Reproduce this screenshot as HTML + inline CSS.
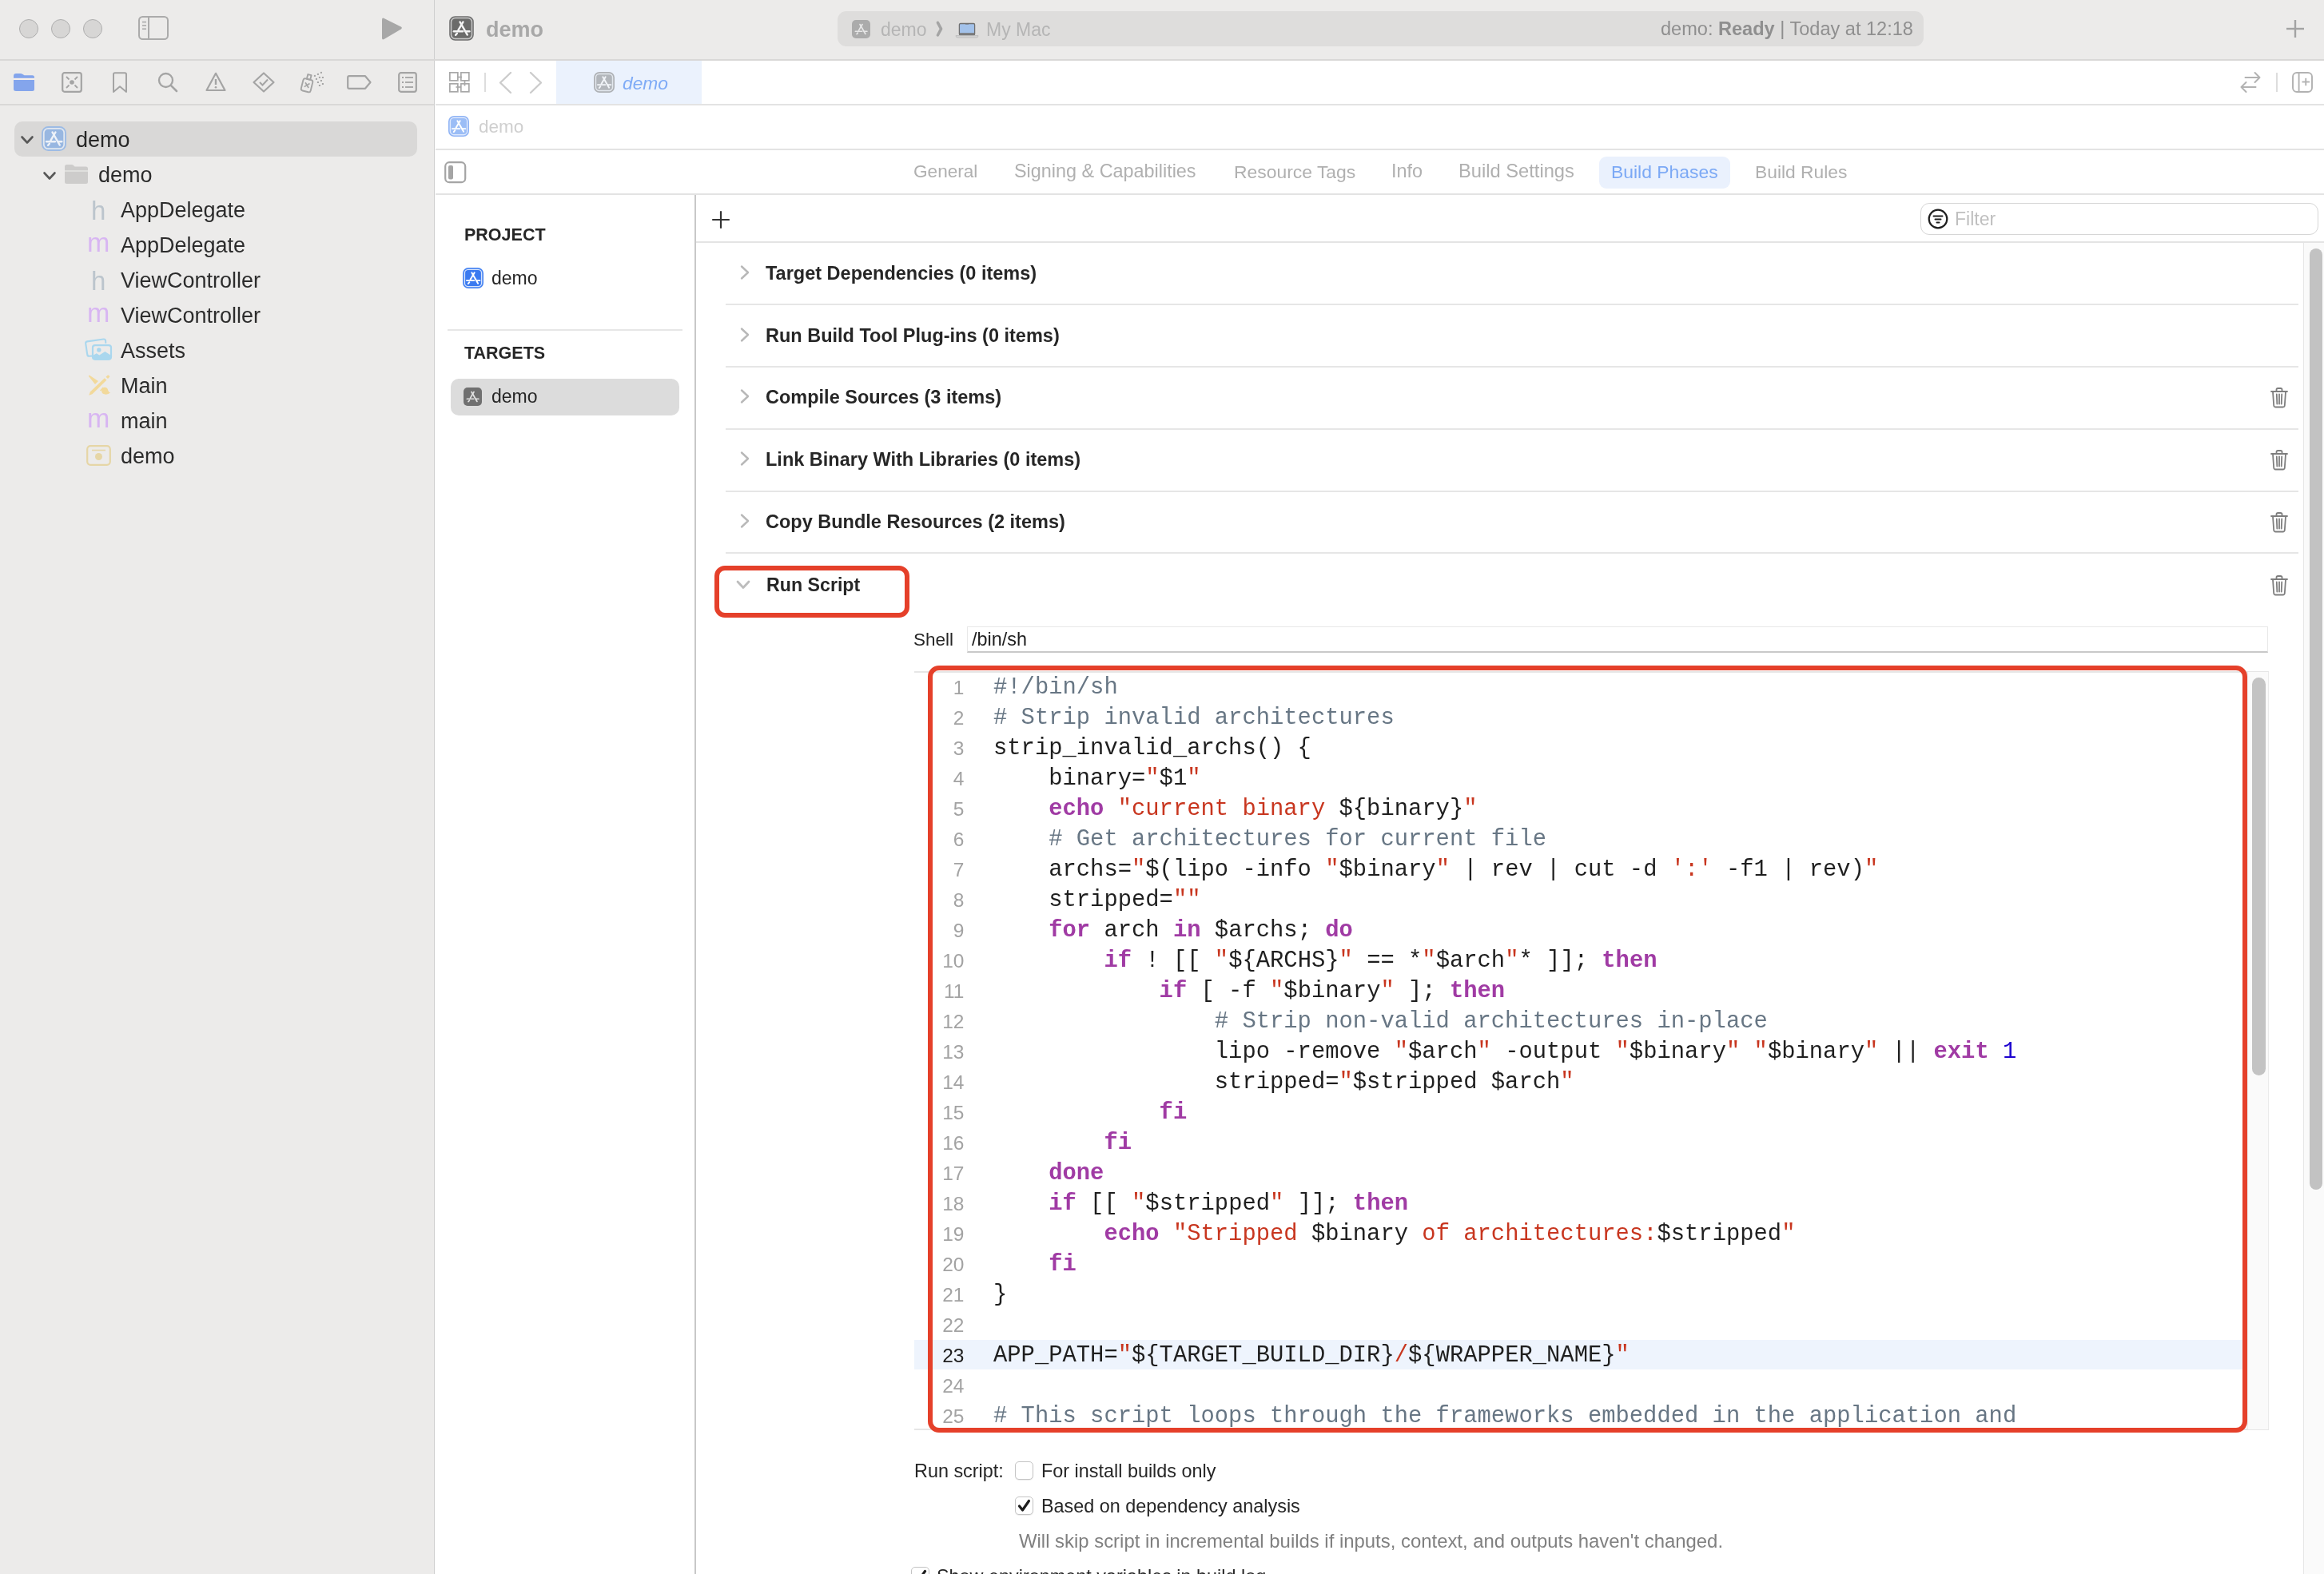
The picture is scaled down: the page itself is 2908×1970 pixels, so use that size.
<!DOCTYPE html>
<html><head><meta charset="utf-8">
<style>
*{margin:0;padding:0;box-sizing:border-box}
html,body{width:2908px;height:1970px;overflow:hidden;background:#fff;font-family:"Liberation Sans",sans-serif;color:#262626;position:relative}
.a{position:absolute}
.t{position:absolute;white-space:pre;line-height:1;will-change:transform}
svg{position:absolute;overflow:visible}
.code{font-family:"Liberation Mono",monospace;font-size:28.83px;color:#1F1F1F}
.ln{font-family:"Liberation Sans",sans-serif;font-size:24.5px;text-align:right}
.cm{color:#677684}
.kw{color:#A03BA4;font-weight:bold}
.st{color:#C8361F}
.nu{color:#1C00CF}
</style></head><body>
<div class="a" style="left:0px;top:0px;width:543px;height:1970px;background:#ECEBEA;"></div>
<div class="a" style="left:543px;top:0px;width:1.3999999999999773px;height:1970px;background:#CFCFCF;"></div>
<div class="a" style="left:544.4px;top:0px;width:2363.6px;height:75px;background:#ECEBEA;"></div>
<div class="a" style="left:0px;top:74px;width:2908px;height:2px;background:#D9D8D7;"></div>
<div class="a" style="left:0px;top:130px;width:543px;height:2px;background:#D9D8D7;"></div>
<div class="a" style="left:545px;top:130px;width:2363px;height:2px;background:#E3E3E3;"></div>
<div class="a" style="left:545px;top:186px;width:2363px;height:2px;background:#E3E3E3;"></div>
<div class="a" style="left:545px;top:242px;width:2363px;height:2px;background:#E3E3E3;"></div>
<div class="a" style="left:869px;top:244px;width:2px;height:1726px;background:#C8C8C8;"></div>
<div class="a" style="left:24px;top:24px;width:24px;height:24px;border-radius:50%;background:#D7D6D5;border:1.3px solid #AEAEAE"></div>
<div class="a" style="left:64px;top:24px;width:24px;height:24px;border-radius:50%;background:#D7D6D5;border:1.3px solid #AEAEAE"></div>
<div class="a" style="left:104px;top:24px;width:24px;height:24px;border-radius:50%;background:#D7D6D5;border:1.3px solid #AEAEAE"></div>
<svg style="left:173px;top:20px" width="38" height="30" viewBox="0 0 38 30"><rect x="1" y="1" width="36" height="28" rx="4.5" fill="none" stroke="#ABABAB" stroke-width="2"/><line x1="13" y1="1.5" x2="13" y2="28.5" stroke="#ABABAB" stroke-width="2"/><g stroke="#ABABAB" stroke-width="1.6"><line x1="5" y1="7.6" x2="10" y2="7.6"/><line x1="5" y1="11.9" x2="10" y2="11.9"/><line x1="5" y1="16.2" x2="10" y2="16.2"/></g></svg>
<svg style="left:476px;top:21px" width="28" height="30" viewBox="0 0 28 30"><path d="M2 3.5 Q2 0.6 4.6 1.9 L25.8 12.6 Q28 14 25.8 15.4 L4.6 28.1 Q2 29.4 2 26.5 Z" fill="#A7A7A7"/></svg>
<svg style="left:16px;top:91px" width="28" height="24" viewBox="0 0 28 24"><path d="M1 4 Q1 1 4 1 L9.5 1 Q11 1 12.5 2 L14.5 3.2 L24.5 3.2 Q27 3.2 27 5.7 L27 20.5 Q27 23 24.5 23 L4 23 Q1 23 1 20.5 Z" fill="#84A5EC"/><rect x="1" y="6.8" width="26" height="2.2" fill="#F7F0EA"/></svg>
<svg style="left:77px;top:90px" width="26" height="26" viewBox="0 0 26 26"><rect x="1.2" y="1.2" width="23.6" height="23.6" rx="2.5" fill="none" stroke="#A4A4A4" stroke-width="2.2"/><circle cx="13" cy="13" r="2.8" fill="#A4A4A4"/><path d="M6 6 L9.5 9.5 M20 6 L16.5 9.5 M6 20 L9.5 16.5 M20 20 L16.5 16.5" stroke="#A4A4A4" stroke-width="1.8"/></svg>
<svg style="left:140px;top:90px" width="20" height="27" viewBox="0 0 20 27"><path d="M2 3 Q2 1.2 3.8 1.2 L16.2 1.2 Q18 1.2 18 3 L18 25 L10 18.3 L2 25 Z" fill="none" stroke="#A4A4A4" stroke-width="2" stroke-linejoin="round"/></svg>
<svg style="left:197px;top:90px" width="26" height="26" viewBox="0 0 26 26"><circle cx="10.5" cy="10.5" r="8.5" fill="none" stroke="#A4A4A4" stroke-width="2.3"/><line x1="16.8" y1="16.8" x2="24" y2="24" stroke="#A4A4A4" stroke-width="2.6" stroke-linecap="round"/></svg>
<svg style="left:257px;top:90px" width="26" height="25" viewBox="0 0 26 25"><path d="M13 1.8 L24.5 23 L1.5 23 Z" fill="none" stroke="#A4A4A4" stroke-width="2.2" stroke-linejoin="round"/><line x1="13" y1="9" x2="13" y2="16" stroke="#A4A4A4" stroke-width="2.4"/><circle cx="13" cy="19.3" r="1.3" fill="#A4A4A4"/></svg>
<svg style="left:316px;top:90px" width="28" height="26" viewBox="0 0 28 26"><path d="M14 1.5 L26.5 13 L14 24.5 L1.5 13 Z" fill="none" stroke="#A4A4A4" stroke-width="2.2" stroke-linejoin="round"/><path d="M9 13 L12.5 16.5 L19 9.5" fill="none" stroke="#A4A4A4" stroke-width="2"/></svg>
<svg style="left:374px;top:90px" width="32" height="28" viewBox="0 0 32 28"><g transform="rotate(14 10.1 16.6)" fill="none" stroke="#A4A4A4" stroke-width="1.9" stroke-linejoin="round"><rect x="4" y="9" width="12.2" height="15.6" rx="2.5"/><rect x="8" y="3.2" width="4.4" height="5.8"/><path d="M7.3 13.8 L12.9 19.4 M12.9 13.8 L7.3 19.4" stroke-width="1.7"/></g><g fill="#A4A4A4"><rect x="18.9" y="3.9000000000000004" width="2" height="2"/><rect x="22.9" y="1.9" width="2" height="2"/><rect x="26.9" y="-0.09999999999999998" width="2" height="2"/><rect x="20.9" y="7.9" width="2" height="2"/><rect x="24.9" y="5.9" width="2" height="2"/><rect x="28.9" y="6" width="2" height="2"/><rect x="22.9" y="12" width="2" height="2"/><rect x="26.9" y="10" width="2" height="2"/><rect x="24.9" y="16" width="2" height="2"/><rect x="28.9" y="14" width="2" height="2"/></g></svg>
<svg style="left:434px;top:94px" width="31" height="18" viewBox="0 0 31 18"><path d="M3 1.2 L23 1.2 L29.5 9 L23 16.8 L3 16.8 Q1.2 16.8 1.2 15 L1.2 3 Q1.2 1.2 3 1.2 Z" fill="none" stroke="#A4A4A4" stroke-width="2.2" stroke-linejoin="round"/></svg>
<svg style="left:498px;top:90px" width="24" height="26" viewBox="0 0 24 26"><rect x="1.2" y="1.2" width="21.6" height="23.6" rx="2.5" fill="none" stroke="#A4A4A4" stroke-width="2.2"/><g stroke="#A4A4A4" stroke-width="1.8"><line x1="5" y1="7" x2="7" y2="7"/><line x1="9" y1="7" x2="19" y2="7"/><line x1="5" y1="13" x2="7" y2="13"/><line x1="9" y1="13" x2="19" y2="13"/><line x1="5" y1="19" x2="7" y2="19"/><line x1="9" y1="19" x2="19" y2="19"/></g></svg>
<div class="a" style="left:18px;top:152px;width:504px;height:44px;background:#D9D8D7;border-radius:10px"></div>
<svg style="left:26px;top:170px" width="16" height="10" viewBox="0 0 16 10"><path d="M1.5 1.5 L8.0 8.5 L14.5 1.5" fill="none" stroke="#585858" stroke-width="2.6" stroke-linecap="round" stroke-linejoin="round"/></svg>
<svg style="left:52px;top:158px" width="31" height="31" viewBox="0 0 31 31"><rect x="0.95" y="0.95" width="29.1" height="29.1" rx="7.4399999999999995" fill="#E2E8F0" stroke="#9DBBE4" stroke-width="1.9"/><rect x="3.7" y="3.7" width="23.6" height="23.6" rx="4.4639999999999995" fill="#98B7E1"/><g stroke="#EEF2F8" stroke-width="2.3249999999999997" stroke-linecap="round" fill="none"><line x1="17.51" y1="7.44" x2="11.47" y2="17.67"/><line x1="13.48" y1="7.44" x2="22.79" y2="23.56"/><line x1="5.89" y1="19.22" x2="17.05" y2="19.22"/><line x1="20.77" y1="19.22" x2="25.42" y2="19.22"/><line x1="9.92" y1="21.70" x2="8.06" y2="23.87"/></g></svg>
<div class="t" style="left:95px;top:162.1px;font-size:27px;color:#262626;font-weight:400;font-style:normal;">demo</div>
<svg style="left:54px;top:215px" width="16" height="10" viewBox="0 0 16 10"><path d="M1.5 1.5 L8.0 8.5 L14.5 1.5" fill="none" stroke="#585858" stroke-width="2.6" stroke-linecap="round" stroke-linejoin="round"/></svg>
<svg style="left:80px;top:205px" width="31" height="26" viewBox="0 0 31 26"><path d="M1 3.5 Q1 1 3.5 1 L10 1 Q11.5 1 12.5 2.5 L13.5 3.5 L27.5 3.5 Q30 3.5 30 6 L30 22.5 Q30 25 27.5 25 L3.5 25 Q1 25 1 22.5 Z" fill="#CDCCCB"/><line x1="1" y1="9" x2="30" y2="9" stroke="#ECEBEA" stroke-width="1.2"/></svg>
<div class="t" style="left:122.5px;top:206.1px;font-size:27px;color:#2C2C2C;font-weight:400;font-style:normal;">demo</div>
<div class="t" style="left:114px;top:247.1px;font-size:33px;color:#BCC5CD;font-weight:400;font-style:normal;font-weight:400">h</div>
<div class="t" style="left:151px;top:250.1px;font-size:27px;color:#2C2C2C;font-weight:400;font-style:normal;">AppDelegate</div>
<div class="t" style="left:109px;top:286.2px;font-size:34px;color:#D8B6F2;font-weight:400;font-style:normal;">m</div>
<div class="t" style="left:151px;top:294.1px;font-size:27px;color:#2C2C2C;font-weight:400;font-style:normal;">AppDelegate</div>
<div class="t" style="left:114px;top:335.1px;font-size:33px;color:#BCC5CD;font-weight:400;font-style:normal;font-weight:400">h</div>
<div class="t" style="left:151px;top:338.1px;font-size:27px;color:#2C2C2C;font-weight:400;font-style:normal;">ViewController</div>
<div class="t" style="left:109px;top:374.2px;font-size:34px;color:#D8B6F2;font-weight:400;font-style:normal;">m</div>
<div class="t" style="left:151px;top:382.1px;font-size:27px;color:#2C2C2C;font-weight:400;font-style:normal;">ViewController</div>
<svg style="left:104px;top:418px" width="40" height="36" viewBox="0 0 40 36"><path d="M12 27.5 L7.8 27.8 Q5.5 28 5.2 25.5 L3.2 12 Q2.9 9.8 5.1 9.4 L25.5 6.5 Q27.8 6.2 28.1 8.4 L28.3 11.8" fill="none" stroke="#AAD7EE" stroke-width="2.1" stroke-linejoin="round"/><rect x="12" y="14.1" width="23" height="17.6" rx="3" fill="#ECEBEA" stroke="#AAD7EE" stroke-width="2.2"/><circle cx="19.8" cy="20" r="2.7" fill="#AAD7EE"/><path d="M12 27 L16.8 24.2 L20.3 26.6 L27.4 21.9 L34.8 26.8 L34.8 29 Q34.8 32.8 31 32.8 L15.8 32.8 Q12 32.8 12 29 Z" fill="#AAD7EE"/></svg>
<div class="t" style="left:151px;top:426.1px;font-size:27px;color:#2C2C2C;font-weight:400;font-style:normal;">Assets</div>
<svg style="left:110px;top:469px" width="30" height="28" viewBox="0 0 30 28"><g fill="#F2D99B"><path d="M0.8 1.8 Q1 0.5 2.5 1 L13 8 L9 12 Z"/><path d="M1.2 25.8 L2.8 21.5 L20.8 4.2 L23.4 6.8 L5.5 24.2 Z"/><path d="M22.5 2.8 L24.5 0.8 Q25.5 0 26.4 0.9 L26.9 1.5 Q27.6 2.3 26.9 3.1 L25 5.1 Z"/><path d="M15 19.5 L18.8 15.6 L19.9 16.7 L16.1 20.6 Z"/><path d="M20.5 15.8 Q24.5 15.5 25.3 19.8 Q25.8 22 28 22.6 Q25.5 25 21.5 24.6 Q17 24 17.2 20 Q17.4 16.2 20.5 15.8 Z"/></g></svg>
<div class="t" style="left:151px;top:470.1px;font-size:27px;color:#2C2C2C;font-weight:400;font-style:normal;">Main</div>
<div class="t" style="left:109px;top:506.2px;font-size:34px;color:#D8B6F2;font-weight:400;font-style:normal;">m</div>
<div class="t" style="left:151px;top:514.1px;font-size:27px;color:#2C2C2C;font-weight:400;font-style:normal;">main</div>
<svg style="left:108px;top:557px" width="31" height="26" viewBox="0 0 31 26"><rect x="1.2" y="1.2" width="28.6" height="23.6" rx="4" fill="none" stroke="#E6D6A6" stroke-width="2.2"/><line x1="7" y1="6.5" x2="24" y2="6.5" stroke="#E6D6A6" stroke-width="1.6"/><circle cx="15.5" cy="14.5" r="4.5" fill="#E6D6A6"/></svg>
<div class="t" style="left:151px;top:558.1px;font-size:27px;color:#2C2C2C;font-weight:400;font-style:normal;">demo</div>
<svg style="left:562px;top:20px" width="31" height="31" viewBox="0 0 31 31"><rect x="1" y="1" width="29" height="29" rx="6.5" fill="#C8C8C8" stroke="#6E6E6E" stroke-width="1.6"/><rect x="3.3" y="3.3" width="24.4" height="24.4" rx="4.5" fill="#6B6B6A"/><g stroke="#F4F4F4" stroke-width="2.4" stroke-linecap="round" fill="none"><line x1="17.51" y1="7.44" x2="11.47" y2="17.67"/><line x1="13.48" y1="7.44" x2="22.79" y2="23.56"/><line x1="5.89" y1="19.22" x2="17.05" y2="19.22"/><line x1="20.77" y1="19.22" x2="25.42" y2="19.22"/><line x1="9.92" y1="21.70" x2="8.06" y2="23.87"/></g></svg>
<div class="t" style="left:608px;top:24.1px;font-size:27px;color:#A8A8A8;font-weight:700;font-style:normal;">demo</div>
<div class="a" style="left:1048px;top:14px;width:1359px;height:44px;background:#DEDDDC;border-radius:11px"></div>
<svg style="left:1066px;top:25px" width="23" height="23" viewBox="0 0 23 23"><rect x="0" y="0" width="23" height="23" rx="5" fill="#ABABAB"/><g stroke="#E6E6E6" stroke-width="1.7" stroke-linecap="round" fill="none"><line x1="12.99" y1="5.52" x2="8.51" y2="13.11"/><line x1="10.01" y1="5.52" x2="16.91" y2="17.48"/><line x1="4.37" y1="14.26" x2="12.65" y2="14.26"/><line x1="15.41" y1="14.26" x2="18.86" y2="14.26"/><line x1="7.36" y1="16.10" x2="5.98" y2="17.71"/></g></svg>
<div class="t" style="left:1102px;top:25.5px;font-size:23px;color:#B5B5B5;font-weight:400;font-style:normal;">demo</div>
<svg style="left:1171px;top:26px" width="10" height="21" viewBox="0 0 10 21"><path d="M2.4 2.4 L6.6 10.2 L2.4 18" fill="none" stroke="#A4A4A4" stroke-width="3.5" stroke-linecap="round" stroke-linejoin="round"/></svg>
<svg style="left:1195px;top:28px" width="30" height="20" viewBox="0 0 30 20"><rect x="5.4" y="1.5" width="19.2" height="14.5" rx="1.4" fill="#A3C2EA" stroke="#6F6F6F" stroke-width="1.3"/><rect x="5.6" y="13.2" width="18.8" height="3" fill="#7A7A7A"/><rect x="13" y="1.2" width="4" height="1.3" fill="#6F6F6F"/><path d="M1 16.6 L29 16.6 Q29 19 27 19 L3 19 Q1 19 1 16.6 Z" fill="#D4D4D4" stroke="#B8B8B8" stroke-width="0.8"/></svg>
<div class="t" style="left:1234px;top:25.5px;font-size:23px;color:#B5B5B5;font-weight:400;font-style:normal;">My Mac</div>
<div class="t" style="left:2078px;top:25.1px;font-size:23.55px;color:#8F8F8F;font-weight:400;font-style:normal;">demo: <b style="color:#8F8F8F">Ready</b> | Today at 12:18</div>
<svg style="left:2860px;top:24px" width="24" height="24" viewBox="0 0 24 24"><line x1="12" y1="1" x2="12" y2="23" stroke="#A3A3A3" stroke-width="2.4"/><line x1="1" y1="12" x2="23" y2="12" stroke="#A3A3A3" stroke-width="2.4"/></svg>
<svg style="left:562px;top:90px" width="26" height="26" viewBox="0 0 26 26"><g fill="none" stroke="#A8A8A8" stroke-width="1.7"><rect x="0.85" y="0.85" width="10" height="10"/><rect x="14.85" y="0.85" width="10" height="10"/><rect x="0.85" y="14.85" width="10" height="10"/><rect x="14.85" y="14.85" width="10" height="10"/><line x1="10.8" y1="6.5" x2="16" y2="6.5"/><line x1="19.5" y1="10.8" x2="19.5" y2="17.5"/><line x1="8.5" y1="19" x2="15" y2="19"/></g></svg>
<div class="a" style="left:606px;top:91px;width:2px;height:24px;background:#DDDDDD;"></div>
<svg style="left:622px;top:89px" width="20" height="29" viewBox="0 0 20 29"><path d="M17 2 L4 14.5 L17 27" fill="none" stroke="#CCCCCC" stroke-width="2.4" stroke-linecap="round" stroke-linejoin="round"/></svg>
<svg style="left:661px;top:89px" width="20" height="29" viewBox="0 0 20 29"><path d="M3 2 L16 14.5 L3 27" fill="none" stroke="#CCCCCC" stroke-width="2.4" stroke-linecap="round" stroke-linejoin="round"/></svg>
<div class="a" style="left:696px;top:76px;width:182px;height:54px;background:#EBF2FD;"></div>
<svg style="left:743px;top:90px" width="26" height="26" viewBox="0 0 26 26"><rect x="0.85" y="0.85" width="24.3" height="24.3" rx="6.24" fill="#E3E8EE" stroke="#AEB1B5" stroke-width="1.7"/><rect x="3.2" y="3.2" width="19.6" height="19.6" rx="3.7439999999999998" fill="#B2B6BB"/><g stroke="#F2F5F9" stroke-width="1.95" stroke-linecap="round" fill="none"><line x1="14.69" y1="6.24" x2="9.62" y2="14.82"/><line x1="11.31" y1="6.24" x2="19.11" y2="19.76"/><line x1="4.94" y1="16.12" x2="14.30" y2="16.12"/><line x1="17.42" y1="16.12" x2="21.32" y2="16.12"/><line x1="8.32" y1="18.20" x2="6.76" y2="20.02"/></g></svg>
<div class="t" style="left:779px;top:92.7px;font-size:22.8px;color:#7FABF6;font-weight:400;font-style:italic;">demo</div>
<svg style="left:2803px;top:89px" width="27" height="28" viewBox="0 0 27 28"><g fill="none" stroke="#B2B2B2" stroke-width="2" stroke-linecap="round" stroke-linejoin="round"><path d="M6.5 8 L24.5 8 M18.5 2 L24.5 8 L18.5 14"/><path d="M19.5 20 L1.5 20 M7.5 14 L1.5 20 L7.5 26"/></g></svg>
<div class="a" style="left:2848px;top:91px;width:2px;height:24px;background:#DDDDDD;"></div>
<svg style="left:2868px;top:90px" width="26" height="26" viewBox="0 0 26 26"><rect x="1" y="1" width="24" height="24" rx="5" fill="none" stroke="#B2B2B2" stroke-width="1.9"/><line x1="8.6" y1="1.5" x2="8.6" y2="24.5" stroke="#B2B2B2" stroke-width="1.9"/><line x1="12.5" y1="12.5" x2="22" y2="12.5" stroke="#B2B2B2" stroke-width="1.9"/><line x1="17.25" y1="7.8" x2="17.25" y2="17.2" stroke="#B2B2B2" stroke-width="1.9"/></svg>
<svg style="left:561px;top:145px" width="26" height="26" viewBox="0 0 26 26"><rect x="0.8" y="0.8" width="24.4" height="24.4" rx="6.24" fill="#DDE8FD" stroke="#90B4F5" stroke-width="1.6"/><rect x="3.1" y="3.1" width="19.8" height="19.8" rx="3.7439999999999998" fill="#9BBDF6"/><g stroke="#FFFFFF" stroke-width="1.95" stroke-linecap="round" fill="none"><line x1="14.69" y1="6.24" x2="9.62" y2="14.82"/><line x1="11.31" y1="6.24" x2="19.11" y2="19.76"/><line x1="4.94" y1="16.12" x2="14.30" y2="16.12"/><line x1="17.42" y1="16.12" x2="21.32" y2="16.12"/><line x1="8.32" y1="18.20" x2="6.76" y2="20.02"/></g></svg>
<div class="t" style="left:599px;top:148.0px;font-size:22.5px;color:#CFCFCF;font-weight:400;font-style:normal;">demo</div>
<svg style="left:556px;top:202px" width="28" height="28" viewBox="0 0 28 28"><rect x="1.2" y="1.2" width="25" height="25" rx="5" fill="none" stroke="#A5A5A5" stroke-width="2.2"/><rect x="5" y="5" width="6" height="17.5" rx="2" fill="#A5A5A5"/></svg>
<div class="a" style="left:2001px;top:196px;width:164px;height:40px;background:#EAF1FD;border-radius:9px"></div>
<div class="t" style="left:1143px;top:203.9px;font-size:22.6px;color:#B0B0B0;font-weight:400;font-style:normal;">General</div>
<div class="t" style="left:1269px;top:203.2px;font-size:23.4px;color:#B0B0B0;font-weight:400;font-style:normal;">Signing &amp; Capabilities</div>
<div class="t" style="left:1543.6px;top:203.6px;font-size:22.9px;color:#B0B0B0;font-weight:400;font-style:normal;">Resource Tags</div>
<div class="t" style="left:1740.7px;top:203.2px;font-size:23.4px;color:#B0B0B0;font-weight:400;font-style:normal;">Info</div>
<div class="t" style="left:1825px;top:202.9px;font-size:23.7px;color:#B0B0B0;font-weight:400;font-style:normal;">Build Settings</div>
<div class="t" style="left:2015.6px;top:203.6px;font-size:22.9px;color:#7CA9F5;font-weight:400;font-style:normal;">Build Phases</div>
<div class="t" style="left:2195.6px;top:203.7px;font-size:22.8px;color:#B0B0B0;font-weight:400;font-style:normal;">Build Rules</div>
<div class="t" style="left:581px;top:283.8px;font-size:21.5px;color:#262626;font-weight:700;font-style:normal;">PROJECT</div>
<svg style="left:579px;top:335px" width="26" height="26" viewBox="0 0 26 26"><rect x="0.85" y="0.85" width="24.3" height="24.3" rx="6.24" fill="#D6E3FC" stroke="#4A86F2" stroke-width="1.7"/><rect x="3.1" y="3.1" width="19.8" height="19.8" rx="3.7439999999999998" fill="#3A7AF0"/><g stroke="#FFFFFF" stroke-width="1.95" stroke-linecap="round" fill="none"><line x1="14.69" y1="6.24" x2="9.62" y2="14.82"/><line x1="11.31" y1="6.24" x2="19.11" y2="19.76"/><line x1="4.94" y1="16.12" x2="14.30" y2="16.12"/><line x1="17.42" y1="16.12" x2="21.32" y2="16.12"/><line x1="8.32" y1="18.20" x2="6.76" y2="20.02"/></g></svg>
<div class="t" style="left:615px;top:337.0px;font-size:23px;color:#262626;font-weight:400;font-style:normal;">demo</div>
<div class="a" style="left:560px;top:412px;width:294px;height:2px;background:#E6E6E6;"></div>
<div class="t" style="left:581px;top:431.8px;font-size:21.5px;color:#262626;font-weight:700;font-style:normal;">TARGETS</div>
<div class="a" style="left:564px;top:474px;width:286px;height:46px;background:#DCDCDC;border-radius:10px"></div>
<svg style="left:580px;top:485px" width="23" height="23" viewBox="0 0 23 23"><rect x="0" y="0" width="23" height="23" rx="5" fill="#707070"/><g stroke="#E2E2E2" stroke-width="1.7" stroke-linecap="round" fill="none"><line x1="12.99" y1="5.52" x2="8.51" y2="13.11"/><line x1="10.01" y1="5.52" x2="16.91" y2="17.48"/><line x1="4.37" y1="14.26" x2="12.65" y2="14.26"/><line x1="15.41" y1="14.26" x2="18.86" y2="14.26"/><line x1="7.36" y1="16.10" x2="5.98" y2="17.71"/></g></svg>
<div class="t" style="left:615px;top:484.5px;font-size:23px;color:#262626;font-weight:400;font-style:normal;">demo</div>
<svg style="left:891px;top:264px" width="22" height="22" viewBox="0 0 22 22"><g stroke="#333333" stroke-width="2.2" stroke-linecap="round"><line x1="11" y1="1" x2="11" y2="21"/><line x1="1" y1="11" x2="21" y2="11"/></g></svg>
<div class="a" style="left:871px;top:302px;width:2037px;height:2px;background:#E4E4E4;"></div>
<div class="a" style="left:2402.5px;top:254px;width:498.5px;height:40px;border:1.5px solid #D6D6D6;border-radius:11px;background:#fff"></div>
<svg style="left:2412px;top:261px" width="26" height="26" viewBox="0 0 26 26"><circle cx="13" cy="13" r="11.3" fill="none" stroke="#1E1E1E" stroke-width="2.2"/><g stroke="#1E1E1E" stroke-width="2" stroke-linecap="round"><line x1="7.5" y1="9.5" x2="18.5" y2="9.5"/><line x1="9.5" y1="13.5" x2="16.5" y2="13.5"/><line x1="11.5" y1="17.5" x2="14.5" y2="17.5"/></g></svg>
<div class="t" style="left:2446px;top:262.5px;font-size:23px;color:#BFBFBF;font-weight:400;font-style:normal;">Filter</div>
<svg style="left:926px;top:331.7px" width="12" height="18" viewBox="0 0 12 18"><path d="M2 1.5 L10 9 L2 16.5" fill="none" stroke="#B8B8B8" stroke-width="2.4" stroke-linecap="round" stroke-linejoin="round"/></svg>
<div class="t" style="left:958px;top:330.8px;font-size:23.5px;color:#262626;font-weight:700;font-style:normal;">Target Dependencies (0 items)</div>
<div class="a" style="left:908px;top:380.2px;width:1968px;height:2.0px;background:#E6E6E6;"></div>
<svg style="left:926px;top:409.5px" width="12" height="18" viewBox="0 0 12 18"><path d="M2 1.5 L10 9 L2 16.5" fill="none" stroke="#B8B8B8" stroke-width="2.4" stroke-linecap="round" stroke-linejoin="round"/></svg>
<div class="t" style="left:958px;top:408.6px;font-size:23.5px;color:#262626;font-weight:700;font-style:normal;">Run Build Tool Plug-ins (0 items)</div>
<div class="a" style="left:908px;top:458.0px;width:1968px;height:2.0px;background:#E6E6E6;"></div>
<svg style="left:926px;top:487.29999999999995px" width="12" height="18" viewBox="0 0 12 18"><path d="M2 1.5 L10 9 L2 16.5" fill="none" stroke="#B8B8B8" stroke-width="2.4" stroke-linecap="round" stroke-linejoin="round"/></svg>
<div class="t" style="left:958px;top:486.4px;font-size:23.5px;color:#262626;font-weight:700;font-style:normal;">Compile Sources (3 items)</div>
<div class="a" style="left:908px;top:535.8px;width:1968px;height:2.0px;background:#E6E6E6;"></div>
<svg style="left:2841px;top:485.29999999999995px" width="22" height="26" viewBox="0 0 22 26"><g fill="none" stroke="#7E7E7E" stroke-width="1.8" stroke-linejoin="round" stroke-linecap="round"><path d="M7.5 4.5 L7.5 2.8 Q7.5 1 9.3 1 L12.7 1 Q14.5 1 14.5 2.8 L14.5 4.5"/><line x1="1" y1="5" x2="21" y2="5"/><path d="M3 5.5 L4.2 22.5 Q4.4 24.5 6.4 24.5 L15.6 24.5 Q17.6 24.5 17.8 22.5 L19 5.5"/><line x1="7.8" y1="8.5" x2="8.3" y2="20.5"/><line x1="11" y1="8.5" x2="11" y2="20.5"/><line x1="14.2" y1="8.5" x2="13.7" y2="20.5"/></g></svg>
<svg style="left:926px;top:565.0999999999999px" width="12" height="18" viewBox="0 0 12 18"><path d="M2 1.5 L10 9 L2 16.5" fill="none" stroke="#B8B8B8" stroke-width="2.4" stroke-linecap="round" stroke-linejoin="round"/></svg>
<div class="t" style="left:958px;top:564.2px;font-size:23.5px;color:#262626;font-weight:700;font-style:normal;">Link Binary With Libraries (0 items)</div>
<div class="a" style="left:908px;top:613.5999999999999px;width:1968px;height:2.0px;background:#E6E6E6;"></div>
<svg style="left:2841px;top:563.0999999999999px" width="22" height="26" viewBox="0 0 22 26"><g fill="none" stroke="#7E7E7E" stroke-width="1.8" stroke-linejoin="round" stroke-linecap="round"><path d="M7.5 4.5 L7.5 2.8 Q7.5 1 9.3 1 L12.7 1 Q14.5 1 14.5 2.8 L14.5 4.5"/><line x1="1" y1="5" x2="21" y2="5"/><path d="M3 5.5 L4.2 22.5 Q4.4 24.5 6.4 24.5 L15.6 24.5 Q17.6 24.5 17.8 22.5 L19 5.5"/><line x1="7.8" y1="8.5" x2="8.3" y2="20.5"/><line x1="11" y1="8.5" x2="11" y2="20.5"/><line x1="14.2" y1="8.5" x2="13.7" y2="20.5"/></g></svg>
<svg style="left:926px;top:642.9px" width="12" height="18" viewBox="0 0 12 18"><path d="M2 1.5 L10 9 L2 16.5" fill="none" stroke="#B8B8B8" stroke-width="2.4" stroke-linecap="round" stroke-linejoin="round"/></svg>
<div class="t" style="left:958px;top:642.0px;font-size:23.5px;color:#262626;font-weight:700;font-style:normal;">Copy Bundle Resources (2 items)</div>
<div class="a" style="left:908px;top:691.4px;width:1968px;height:2.0px;background:#E6E6E6;"></div>
<svg style="left:2841px;top:640.9px" width="22" height="26" viewBox="0 0 22 26"><g fill="none" stroke="#7E7E7E" stroke-width="1.8" stroke-linejoin="round" stroke-linecap="round"><path d="M7.5 4.5 L7.5 2.8 Q7.5 1 9.3 1 L12.7 1 Q14.5 1 14.5 2.8 L14.5 4.5"/><line x1="1" y1="5" x2="21" y2="5"/><path d="M3 5.5 L4.2 22.5 Q4.4 24.5 6.4 24.5 L15.6 24.5 Q17.6 24.5 17.8 22.5 L19 5.5"/><line x1="7.8" y1="8.5" x2="8.3" y2="20.5"/><line x1="11" y1="8.5" x2="11" y2="20.5"/><line x1="14.2" y1="8.5" x2="13.7" y2="20.5"/></g></svg>
<svg style="left:921px;top:726px" width="18" height="12" viewBox="0 0 18 12"><path d="M2 2 L9 9.5 L16 2" fill="none" stroke="#BDBDBD" stroke-width="2.8" stroke-linecap="round" stroke-linejoin="round"/></svg>
<div class="t" style="left:959px;top:721.4px;font-size:23.2px;color:#262626;font-weight:700;font-style:normal;">Run Script</div>
<svg style="left:2841px;top:720px" width="22" height="26" viewBox="0 0 22 26"><g fill="none" stroke="#7E7E7E" stroke-width="1.8" stroke-linejoin="round" stroke-linecap="round"><path d="M7.5 4.5 L7.5 2.8 Q7.5 1 9.3 1 L12.7 1 Q14.5 1 14.5 2.8 L14.5 4.5"/><line x1="1" y1="5" x2="21" y2="5"/><path d="M3 5.5 L4.2 22.5 Q4.4 24.5 6.4 24.5 L15.6 24.5 Q17.6 24.5 17.8 22.5 L19 5.5"/><line x1="7.8" y1="8.5" x2="8.3" y2="20.5"/><line x1="11" y1="8.5" x2="11" y2="20.5"/><line x1="14.2" y1="8.5" x2="13.7" y2="20.5"/></g></svg>
<div class="a" style="left:893.5px;top:708px;width:244px;height:64.5px;border:6px solid #E5402A;border-radius:13px"></div>
<div class="t" style="left:1143px;top:790.0px;font-size:22.5px;color:#262626;font-weight:400;font-style:normal;">Shell</div>
<div class="a" style="left:1210px;top:784px;width:1628px;height:33px;background:#fff;border:1px solid #E8E8E8;border-bottom:2px solid #C9C9C9"></div>
<div class="t" style="left:1216px;top:789.2px;font-size:23.4px;color:#1E1E1E;font-weight:400;font-style:normal;">/bin/sh</div>
<div class="a" style="left:1144px;top:840px;width:1695px;height:2px;background:#E6E6E6;"></div>
<div class="a" style="left:1144px;top:1788px;width:1695px;height:2px;background:#E6E6E6;"></div>
<div class="a" style="left:1144px;top:1677px;width:1664px;height:37px;background:#EEF4FD;"></div>
<div class="a" style="left:2812px;top:841px;width:27px;height:948px;background:#FAFAFA;border-left:1px solid #EBEBEB;border-right:1px solid #EBEBEB"></div>
<div class="a" style="left:2818px;top:848px;width:17px;height:498px;background:#C3C3C3;border-radius:8.5px"></div>
<div class="t code" style="left:1242.5px;top:846.5px"><span class="cm">#!/bin/sh</span></div>
<div class="t ln" style="left:1140px;width:66.5px;top:849.1px;color:#A3A3A3">1</div>
<div class="t code" style="left:1242.5px;top:884.5px"><span class="cm"># Strip invalid architectures</span></div>
<div class="t ln" style="left:1140px;width:66.5px;top:887.1px;color:#A3A3A3">2</div>
<div class="t code" style="left:1242.5px;top:922.5px">strip_invalid_archs() {</div>
<div class="t ln" style="left:1140px;width:66.5px;top:925.1px;color:#A3A3A3">3</div>
<div class="t code" style="left:1242.5px;top:960.5px">    binary=<span class="st">&quot;</span>$1<span class="st">&quot;</span></div>
<div class="t ln" style="left:1140px;width:66.5px;top:963.1px;color:#A3A3A3">4</div>
<div class="t code" style="left:1242.5px;top:998.5px">    <span class="kw">echo</span> <span class="st">&quot;current binary </span>${binary}<span class="st">&quot;</span></div>
<div class="t ln" style="left:1140px;width:66.5px;top:1001.1px;color:#A3A3A3">5</div>
<div class="t code" style="left:1242.5px;top:1036.5px">    <span class="cm"># Get architectures for current file</span></div>
<div class="t ln" style="left:1140px;width:66.5px;top:1039.1px;color:#A3A3A3">6</div>
<div class="t code" style="left:1242.5px;top:1074.5px">    archs=<span class="st">&quot;</span>$(lipo -info <span class="st">&quot;</span>$binary<span class="st">&quot;</span> | rev | cut -d <span class="st">&#x27;:&#x27;</span> -f1 | rev)<span class="st">&quot;</span></div>
<div class="t ln" style="left:1140px;width:66.5px;top:1077.1px;color:#A3A3A3">7</div>
<div class="t code" style="left:1242.5px;top:1112.5px">    stripped=<span class="st">&quot;&quot;</span></div>
<div class="t ln" style="left:1140px;width:66.5px;top:1115.1px;color:#A3A3A3">8</div>
<div class="t code" style="left:1242.5px;top:1150.5px">    <span class="kw">for</span> arch <span class="kw">in</span> $archs; <span class="kw">do</span></div>
<div class="t ln" style="left:1140px;width:66.5px;top:1153.1px;color:#A3A3A3">9</div>
<div class="t code" style="left:1242.5px;top:1188.5px">        <span class="kw">if</span> ! [[ <span class="st">&quot;</span>${ARCHS}<span class="st">&quot;</span> == *<span class="st">&quot;</span>$arch<span class="st">&quot;</span>* ]]; <span class="kw">then</span></div>
<div class="t ln" style="left:1140px;width:66.5px;top:1191.1px;color:#A3A3A3">10</div>
<div class="t code" style="left:1242.5px;top:1226.5px">            <span class="kw">if</span> [ -f <span class="st">&quot;</span>$binary<span class="st">&quot;</span> ]; <span class="kw">then</span></div>
<div class="t ln" style="left:1140px;width:66.5px;top:1229.1px;color:#A3A3A3">11</div>
<div class="t code" style="left:1242.5px;top:1264.5px">                <span class="cm"># Strip non-valid architectures in-place</span></div>
<div class="t ln" style="left:1140px;width:66.5px;top:1267.1px;color:#A3A3A3">12</div>
<div class="t code" style="left:1242.5px;top:1302.5px">                lipo -remove <span class="st">&quot;</span>$arch<span class="st">&quot;</span> -output <span class="st">&quot;</span>$binary<span class="st">&quot;</span> <span class="st">&quot;</span>$binary<span class="st">&quot;</span> || <span class="kw">exit</span> <span class="nu">1</span></div>
<div class="t ln" style="left:1140px;width:66.5px;top:1305.1px;color:#A3A3A3">13</div>
<div class="t code" style="left:1242.5px;top:1340.5px">                stripped=<span class="st">&quot;</span>$stripped $arch<span class="st">&quot;</span></div>
<div class="t ln" style="left:1140px;width:66.5px;top:1343.1px;color:#A3A3A3">14</div>
<div class="t code" style="left:1242.5px;top:1378.5px">            <span class="kw">fi</span></div>
<div class="t ln" style="left:1140px;width:66.5px;top:1381.1px;color:#A3A3A3">15</div>
<div class="t code" style="left:1242.5px;top:1416.5px">        <span class="kw">fi</span></div>
<div class="t ln" style="left:1140px;width:66.5px;top:1419.1px;color:#A3A3A3">16</div>
<div class="t code" style="left:1242.5px;top:1454.5px">    <span class="kw">done</span></div>
<div class="t ln" style="left:1140px;width:66.5px;top:1457.1px;color:#A3A3A3">17</div>
<div class="t code" style="left:1242.5px;top:1492.5px">    <span class="kw">if</span> [[ <span class="st">&quot;</span>$stripped<span class="st">&quot;</span> ]]; <span class="kw">then</span></div>
<div class="t ln" style="left:1140px;width:66.5px;top:1495.1px;color:#A3A3A3">18</div>
<div class="t code" style="left:1242.5px;top:1530.5px">        <span class="kw">echo</span> <span class="st">&quot;Stripped </span>$binary<span class="st"> of architectures:</span>$stripped<span class="st">&quot;</span></div>
<div class="t ln" style="left:1140px;width:66.5px;top:1533.1px;color:#A3A3A3">19</div>
<div class="t code" style="left:1242.5px;top:1568.5px">    <span class="kw">fi</span></div>
<div class="t ln" style="left:1140px;width:66.5px;top:1571.1px;color:#A3A3A3">20</div>
<div class="t code" style="left:1242.5px;top:1606.5px">}</div>
<div class="t ln" style="left:1140px;width:66.5px;top:1609.1px;color:#A3A3A3">21</div>
<div class="t code" style="left:1242.5px;top:1644.5px"></div>
<div class="t ln" style="left:1140px;width:66.5px;top:1647.1px;color:#A3A3A3">22</div>
<div class="t code" style="left:1242.5px;top:1682.5px">APP_PATH=<span class="st">&quot;</span>${TARGET_BUILD_DIR}<span class="st">/</span>${WRAPPER_NAME}<span class="st">&quot;</span></div>
<div class="t ln" style="left:1140px;width:66.5px;top:1685.1px;color:#1E1E1E">23</div>
<div class="t code" style="left:1242.5px;top:1720.5px"></div>
<div class="t ln" style="left:1140px;width:66.5px;top:1723.1px;color:#A3A3A3">24</div>
<div class="t code" style="left:1242.5px;top:1758.5px"><span class="cm"># This script loops through the frameworks embedded in the application and</span></div>
<div class="t ln" style="left:1140px;width:66.5px;top:1761.1px;color:#A3A3A3">25</div>
<div class="a" style="left:1160.5px;top:833px;width:1651.5px;height:959.5px;border:6px solid #E5402A;border-radius:14px"></div>
<div class="t" style="left:1144px;top:1829.7px;font-size:23.4px;color:#262626;font-weight:400;font-style:normal;">Run script:</div>
<div class="a" style="left:1270px;top:1829px;width:23px;height:23px;border:1px solid #C4C4C4;border-radius:5px;background:#fff;box-shadow:0 1px 1px rgba(0,0,0,0.08)"></div>
<div class="t" style="left:1303px;top:1829.7px;font-size:23.4px;color:#262626;font-weight:400;font-style:normal;">For install builds only</div>
<div class="a" style="left:1270px;top:1873px;width:23px;height:23px;border:1px solid #C4C4C4;border-radius:5px;background:#fff;box-shadow:0 1px 1px rgba(0,0,0,0.08)"></div>
<svg style="left:1273px;top:1876px" width="17" height="17" viewBox="0 0 17 17"><path d="M2.5 9 L6.5 14 L14.5 2.5" fill="none" stroke="#1E1E1E" stroke-width="3.2" stroke-linecap="round" stroke-linejoin="round"/></svg>
<div class="t" style="left:1303px;top:1873.7px;font-size:23.4px;color:#262626;font-weight:400;font-style:normal;">Based on dependency analysis</div>
<div class="t" style="left:1275px;top:1916.8px;font-size:23.9px;color:#808080;font-weight:400;font-style:normal;">Will skip script in incremental builds if inputs, context, and outputs haven't changed.</div>
<div class="a" style="left:1140px;top:1961px;width:23px;height:23px;border:1px solid #C4C4C4;border-radius:5px;background:#fff;box-shadow:0 1px 1px rgba(0,0,0,0.08)"></div>
<svg style="left:1143px;top:1964px" width="17" height="17" viewBox="0 0 17 17"><path d="M2.5 9 L6.5 14 L14.5 2.5" fill="none" stroke="#1E1E1E" stroke-width="3.2" stroke-linecap="round" stroke-linejoin="round"/></svg>
<div class="t" style="left:1172px;top:1962.2px;font-size:23.4px;color:#262626;font-weight:400;font-style:normal;">Show environment variables in build log</div>
<div class="a" style="left:2882px;top:304px;width:26px;height:1666px;background:#FAFAFA;border-left:1px solid #E6E6E6"></div>
<div class="a" style="left:2890px;top:311px;width:16px;height:1178px;background:#C2C2C2;border-radius:8px"></div>
</body></html>
